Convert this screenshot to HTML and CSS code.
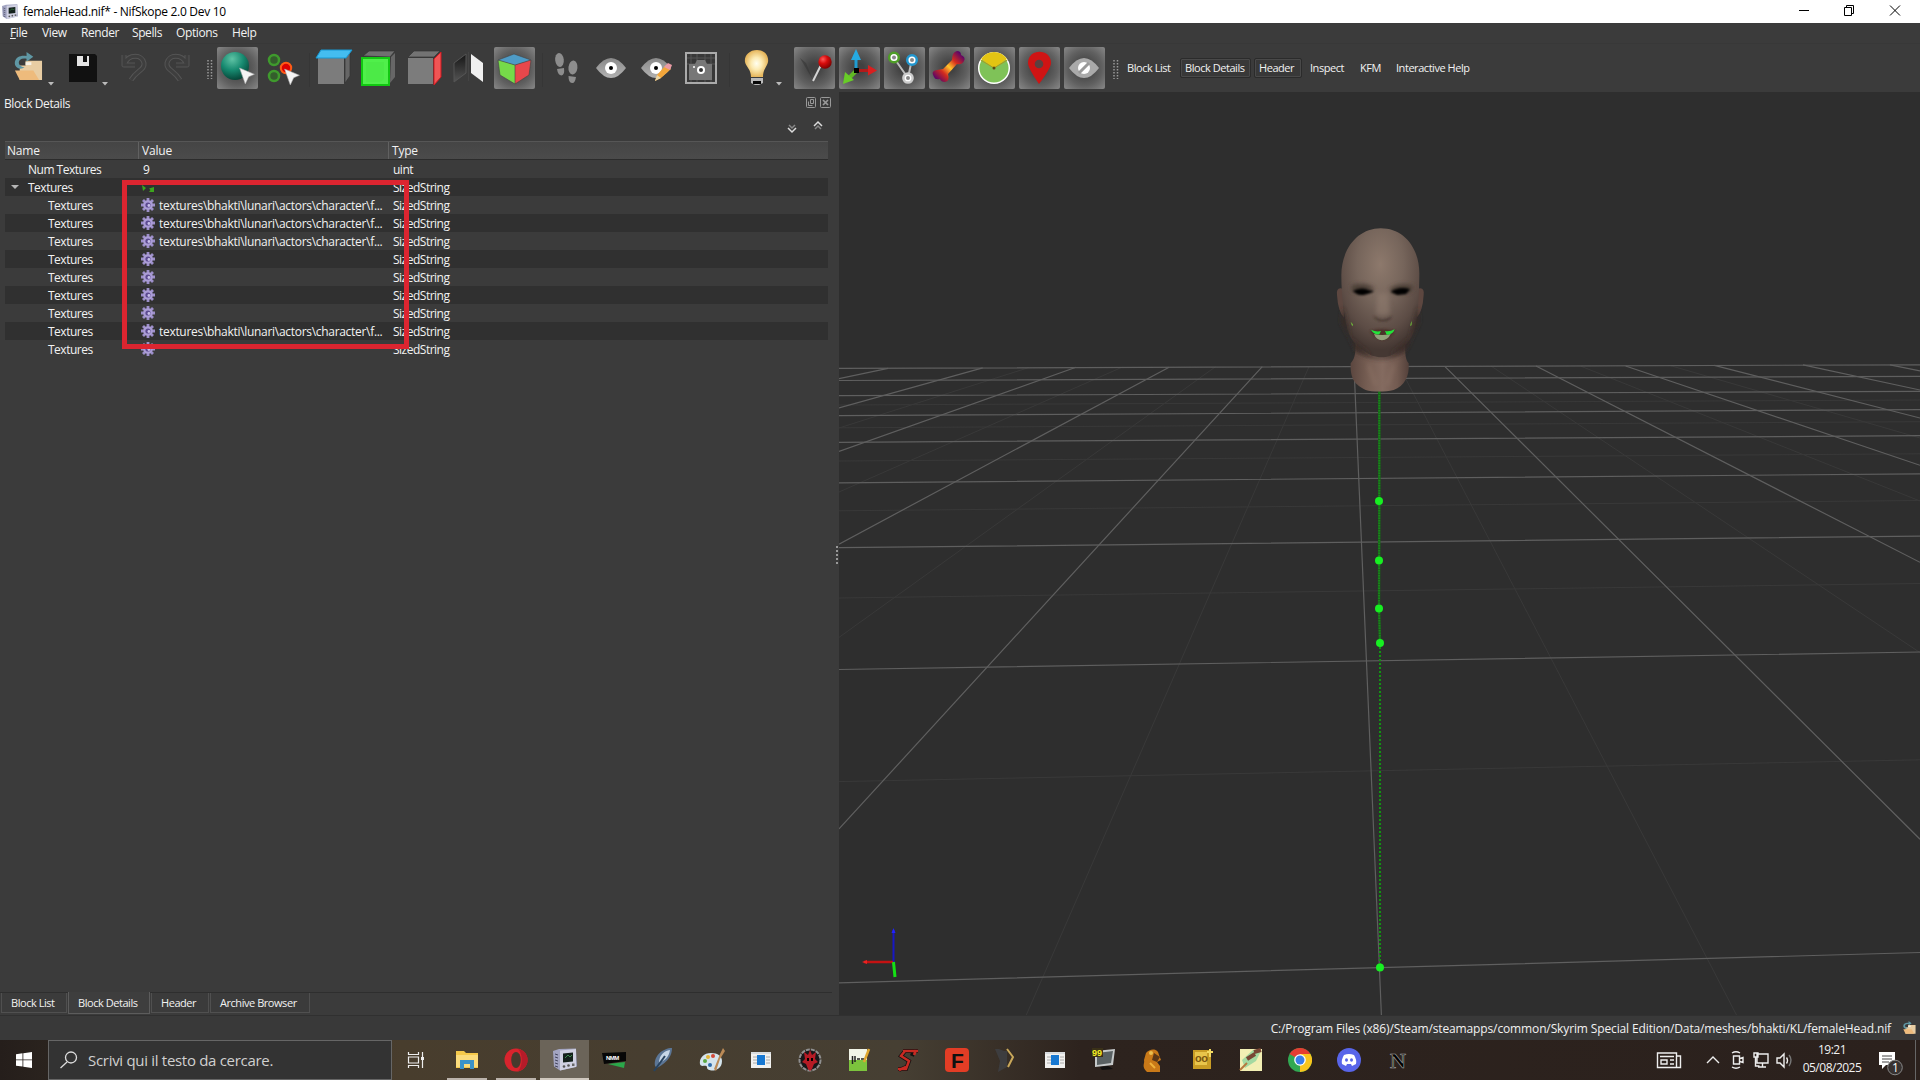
FILE: index.html
```
<!DOCTYPE html>
<html lang="it">
<head>
  <meta charset="UTF-8" />
  <title>femaleHead.nif* - NifSkope 2.0 Dev 10</title>
  <link rel="stylesheet" href="styles.css">
</head>
<body>
  <!-- shared icons and gradients -->
  <svg class="defs" width="0" height="0">
    <defs>
      <symbol id="gear" viewBox="0 0 14 14">
        <g stroke="#9d8fca" stroke-width="2.8">
          <path d="M7 0v14M0 7h14M2 2l10 10M12 2L2 12"/>
        </g>
        <circle cx="7" cy="7" r="4.800" fill="#ab9dd6"/>
        <circle cx="7" cy="7" r="2.600" fill="#5c4a90"/>
        <circle cx="7.900" cy="7.500" r="1.400" fill="#c9c0ea"/>
      </symbol>
      <symbol id="folder" viewBox="0 0 32 32">
        <path d="M14 9h17v20H8V14h6z" fill="#e8cda3"/>
        <path d="M3 19h19l6 10H8z" fill="#eebb7c"/>
        <path d="M13 16c-5 3-11 0-10-6 1-5 6-7 12-6V0l7 5-7 5V7c-5-1-8 1-8 4 0 2 2 4 6 5z" fill="#5f97a4"/>
        <path d="M14 12h6" stroke="#f6f1e6" stroke-width="3"/>
      </symbol>
      <symbol id="cursor" viewBox="0 0 14 15">
        <path d="M.5 .5l13 5.500-5 2.200-3 6.300z" fill="#f4f4f4" stroke="#aaa" stroke-width=".5"/>
      </symbol>
      <symbol id="exe" viewBox="0 0 24 24">
        <path d="M2 4h20v16H2z" fill="#f1f1ef"/>
        <path d="M2 4h20v2H2z" fill="#d8dcdf"/>
        <path d="M4 9h4M4 12h4M4 15h4M17 9h4M17 12h4M17 15h4" stroke="#aaa" stroke-width="1"/>
        <path d="M8 7h8v10H8z" fill="#1778d2"/>
      </symbol>
      <symbol id="nifskope" viewBox="0 0 24 24">
        <path d="M0 3l6-2 17-.500 1 18-17 4-6-4z" fill="#a3a5c2"/>
        <path d="M7 2.500l16-1.500v18L7 22.500z" fill="#d0d1e2"/>
        <path d="M10 5.500l10-1v9l-10 1z" fill="#15211c"/>
        <path d="M12 10l3-3 2 2 2-2" stroke="#3c8a4c" fill="none"/>
        <path d="M2 6l3 1M2 9l3 1M2 12l3 1M2 15l3 1M2 18l3 1" stroke="#44455e"/>
        <circle cx="11" cy="18.500" r="1.300" fill="#555"/>
        <circle cx="15.500" cy="17.500" r="1.300" fill="#555"/>
        <path d="M19 15.500h2.500v2.500H19z" fill="#666"/>
      </symbol>
      <radialGradient id="ball" cx=".4" cy=".25" r=".8">
        <stop offset="0" stop-color="#5fc3a5"/><stop offset=".5" stop-color="#178a70"/><stop offset="1" stop-color="#043e32"/>
      </radialGradient>
      <radialGradient id="pinball" cx=".35" cy=".3" r=".8">
        <stop offset="0" stop-color="#ff5a5a"/><stop offset=".4" stop-color="#d80c0c"/><stop offset="1" stop-color="#6d0000"/>
      </radialGradient>
      <radialGradient id="bulb">
        <stop offset="0" stop-color="#fffef0"/><stop offset=".45" stop-color="#fcebb4"/><stop offset="1" stop-color="#e6b65c"/>
      </radialGradient>
      <linearGradient id="bone" x1="0" y1="1" x2="1" y2="0">
        <stop offset=".08" stop-color="#4c0070"/><stop offset=".32" stop-color="#d32b1e"/><stop offset=".5" stop-color="#ffc52c"/><stop offset=".68" stop-color="#d32b1e"/><stop offset=".92" stop-color="#4c0070"/>
      </linearGradient>
      <linearGradient id="silver" x1="0" y1="0" x2="0" y2="1">
        <stop offset="0" stop-color="#8a8a8a"/><stop offset="1" stop-color="#b2b2b2"/>
      </linearGradient>
      <linearGradient id="mirror" x1="0" y1="0" x2="0" y2="1">
        <stop offset="0" stop-color="#151515"/><stop offset="1" stop-color="#555"/>
      </linearGradient>
      <linearGradient id="neck" x1="0" x2="1">
        <stop offset="0" stop-color="#5b463f"/><stop offset=".3" stop-color="#775f54"/><stop offset=".55" stop-color="#846b60"/><stop offset=".8" stop-color="#735b51"/><stop offset="1" stop-color="#54413b"/>
      </linearGradient>
      <radialGradient id="skin" cx=".5" cy=".28" r=".66">
        <stop offset="0" stop-color="#8d796c"/><stop offset=".45" stop-color="#76655b"/><stop offset=".8" stop-color="#5c4c45"/><stop offset="1" stop-color="#453833"/>
      </radialGradient>
      <filter id="soft" x="-50%" y="-50%" width="200%" height="200%"><feGaussianBlur stdDeviation="6"/></filter>
      <filter id="soft2" x="-50%" y="-50%" width="200%" height="200%"><feGaussianBlur stdDeviation="3"/></filter>
    </defs>
  </svg>

  <header class="titlebar">
    <svg width="16" height="16"><use href="#nifskope"/></svg>
    <span class="title">femaleHead.nif* - NifSkope 2.0 Dev 10</span>
    <svg class="winbtns" width="122" height="23" viewBox="1798 0 122 23" fill="none" stroke="#000">
      <path d="M1799 10.500h10M1844.500 7.500h7v8h-7zM1846.500 7v-1.500h7v8h-2M1890 5.500l10 10M1900 5.500l-10 10"/>
    </svg>
  </header>

  <nav class="menubar">
    <span class="m-file"><u>F</u>ile</span>
    <span class="m-view">View</span>
    <span class="m-render">Render</span>
    <span class="m-spells">Spells</span>
    <span class="m-options">Options</span>
    <span class="m-help">Help</span>
  </nav>

  <div class="toolbar">
    <svg width="60" height="49" viewBox="0 43 60 49">
      <use href="#folder" x="11" y="51" width="33" height="31"/>
      <path d="M48 81h6l-3 3.500z" fill="#bbb"/>
    </svg>
    <svg width="55" height="49" viewBox="60 43 55 49">
      <path d="M69 53h26l2 2v26H69z" fill="#111"/>
      <path d="M77 55h12v10H77z" fill="#e4e4e4"/><path d="M83 55h4v6h-4z" fill="#111"/>
      <path d="M102 81h6l-3 3.500z" fill="#bbb"/>
    </svg>
    <svg width="85" height="49" viewBox="115 43 85 49" fill="none">
      <g stroke="#555" stroke-width="5" stroke-linejoin="round">
        <path d="M124 54v10h11M125 62c4-9 17-9 19 0 1 7-7 7-13 17"/>
        <path d="M187 54v10h-11M186 62c-4-9-17-9-19 0-1 7 7 7 13 17"/>
      </g>
      <g stroke="#3e3e3e" stroke-width="3">
        <path d="M124 54v10h11M125 62c4-9 17-9 19 0 1 7-7 7-13 17"/>
        <path d="M187 54v10h-11M186 62c-4-9-17-9-19 0-1 7 7 7 13 17"/>
      </g>
    </svg>
    <svg width="15" height="49" viewBox="200 43 15 49"><path d="M208 59v19M211.500 59v19" stroke="#999" stroke-width="1.500" stroke-dasharray="1.500 1.500"/></svg>
    <svg class="checked" width="41" height="42" viewBox="217 46 41 42">
      <circle cx="235" cy="65" r="14" fill="url(#ball)"/>
      <use href="#cursor" x="239" y="66" width="16" height="18"/>
    </svg>
    <svg width="50" height="49" viewBox="260 43 50 49">
      <g fill="#345d2c" stroke="#3f9a2d" stroke-width="2.500"><circle cx="274" cy="59" r="5"/><circle cx="274" cy="75" r="5"/></g>
      <circle cx="286" cy="67" r="5.200" fill="#d00" stroke="#ff5a16" stroke-width="2"/>
      <use href="#cursor" x="284" y="67" width="16" height="18"/>
      <path d="M309.500 52v34" stroke="#363636"/>
    </svg>
    <svg width="47" height="49" viewBox="310 43 47 49">
      <path d="M318 57h26v26h-26z" fill="#7c7c7c"/><path d="M345 56l5-6v25l-5 7z" fill="#666" stroke="#333" stroke-width=".7"/>
      <path d="M316 57l5-8h31l-6 8z" fill="#44bdf0" stroke="#1698d3"/>
    </svg>
    <svg width="45" height="49" viewBox="357 43 45 49">
      <path d="M363 55l6-5h26l-5 6z" fill="#707070" stroke="#333" stroke-width=".7"/><path d="M391 56l4-4v24l-5 6z" fill="#676767"/>
      <path d="M362 57h27v27h-27z" fill="#50ef4b" stroke="#12c812" stroke-width="2"/>
      <path d="M366 61h18v17l-4 3h-14z" fill="#4cea47"/>
    </svg>
    <svg width="45" height="49" viewBox="402 43 45 49">
      <path d="M408 57h25v26h-25z" fill="#7c7c7c"/><path d="M408 56l6-6h26l-6 6z" fill="#737373" stroke="#333" stroke-width=".7"/>
      <path d="M434 58l7-7v25l-7 8z" fill="#f05555" stroke="#d31820"/>
    </svg>
    <svg width="45" height="49" viewBox="447 43 45 49">
      <path d="M454 62l12-9v19l-12 9z" fill="url(#mirror)" stroke="#555"/>
      <path d="M468.500 51v29" stroke="#444"/><path d="M471 53l12 9v19l-12-9z" fill="#f0f0f0"/>
    </svg>
    <svg class="checked" width="41" height="42" viewBox="494 46 41 42">
      <path d="M498 59l16-6 17 6-16 5z" fill="#4e9bc6"/>
      <path d="M498 59l17 5v19l-15-9z" fill="#76da49"/><path d="M515 64l16-5-2 15-14 9z" fill="#e8474b"/>
      <path d="M498 59l17 5v19l-15-9zM515 64l16-5-2 15-14 9M498 59l16-6 17 6" fill="none" stroke="#444" stroke-width=".6"/>
    </svg>
    <svg width="53" height="49" viewBox="537 43 53 49" fill="#8d8d8d">
      <path d="M542.500 52v34" stroke="#363636"/>
      <ellipse cx="559.500" cy="59" rx="4.300" ry="7" transform="rotate(-6 559 59)"/><path d="M557 68l7-1q1 7-2.500 7.500-3.500 0-4.500-6.500z"/>
      <ellipse cx="573" cy="66.500" rx="4.500" ry="7" transform="rotate(6 573 66)"/><path d="M568.500 75l7.500 1q-1 6.500-4 6-3.500 0-3.500-7z"/>
    </svg>
    <svg width="44" height="49" viewBox="590 43 44 49">
      <path d="M596 67q15-20 30 0-15 20-30 0z" fill="url(#silver)"/><circle cx="611" cy="67" r="6" fill="#fff"/><circle cx="611" cy="67" r="2" fill="#000"/>
    </svg>
    <svg width="46" height="49" viewBox="634 43 46 49">
      <path d="M641 67q15-20 30 0-15 20-30 0z" fill="url(#silver)"/><circle cx="656" cy="67" r="6" fill="#fff"/><circle cx="656" cy="67" r="2" fill="#000"/>
      <path d="M655 80l2-6 9-10 5 4-10 9z" fill="#f3a63a"/><path d="M664 66l4-4 4 2-2 5z" fill="#e99aa5"/><path d="M655 80l2-6 4 3z" fill="#e9d6a8"/>
    </svg>
    <svg width="50" height="49" viewBox="680 43 50 49">
      <path d="M686 52h30v30h-30z" fill="#383838" stroke="#aaa" stroke-width="2"/>
      <path d="M691 53v28M697 53v28M705 53v28M711 53v28M687 57h28M687 63h28" stroke="#555"/>
      <path d="M689 63h6l2-4h8l2 4h5v16h-23z" fill="#777"/><circle cx="701" cy="69" r="4" fill="#fff"/><circle cx="701" cy="69" r="2" fill="#333"/><circle cx="694" cy="66" r="1" fill="#fff"/>
      <path d="M729.500 52v34" stroke="#363636"/>
    </svg>
    <svg width="62" height="49" viewBox="730 43 62 49">
      <path d="M751 77h12v5l-4 2h-4l-4-2z" fill="#b9b9b9"/><path d="M753 80h8v3h-8z" fill="#080808"/>
      <path d="M757 49c8 0 12 6 11 12-1 5-5 7-5 15h-12c0-8-5-10-6-15-1-6 4-12 12-12z" fill="url(#bulb)"/>
      <path d="M776 81h6l-3 3.500z" fill="#bbb"/>
    </svg>
    <svg class="checked" width="41" height="42" viewBox="794 46 41 42">
      <path d="M800 57l6 5 7 17z" fill="#333" opacity=".55"/><path d="M822 62l-9 18" stroke="#d4d4d4" stroke-width="2"/>
      <circle cx="825" cy="61" r="6.700" fill="url(#pinball)"/>
    </svg>
    <svg class="checked" width="41" height="42" viewBox="839 46 41 42">
      <path d="M856 69v-14" stroke="#1f9cd2" stroke-width="3"/><path d="M851 59l5-11 5 11z" fill="#25aae3"/>
      <path d="M856 69.500h14" stroke="#b31a1a" stroke-width="3"/><path d="M868 64l9 5.500-9 5z" fill="#d91f1f"/>
      <path d="M856 70l-8 8" stroke="#61b824" stroke-width="4"/><path d="M845 71l9 8-11 4z" fill="#68cd27"/>
      <path d="M854 67h5v5h-5z" fill="#000"/>
    </svg>
    <svg class="checked" width="41" height="42" viewBox="884 46 41 42">
      <path d="M894 57l14 20 4-19" stroke="#bbb" stroke-width="2" fill="none"/>
      <g fill="#fff" stroke-width="2.500"><circle cx="894" cy="56.500" r="4.800" stroke="#4e9e26"/><circle cx="912" cy="59" r="4.800" stroke="#2297cf"/><circle cx="908" cy="77" r="4.600" stroke="#ccc"/></g>
      <g fill="#888"><circle cx="894" cy="56.500" r="2"/><circle cx="912" cy="59" r="2"/><circle cx="908" cy="77" r="2"/></g>
    </svg>
    <svg class="checked" width="41" height="42" viewBox="929 46 41 42">
      <path d="M934 76q-4-6 3-7l6-1 9-9q0-8 5-9 4 0 4 4 5 2 3 6-2 4-7 3l-9 10q2 7-3 8-4 0-5-3-5 1-6-2z" fill="url(#bone)"/>
    </svg>
    <svg class="checked" width="41" height="42" viewBox="974 46 41 42">
      <circle cx="994" cy="67" r="15.300" fill="#7fc258" stroke="#fff" stroke-width="1.500"/>
      <path d="M994 67l-13-9q5-7 13-7t13 7z" fill="#e3c413"/><path d="M980.500 59l13.500 8 13.500-8" stroke="#a99a22" fill="none"/><circle cx="994" cy="67" r="1.500" fill="#5c4a12"/>
    </svg>
    <svg class="checked" width="41" height="42" viewBox="1019 46 41 42">
      <path d="M1039 83q-11-16-11-21c0-15 23-15 23 0q0 5-12 21z" fill="#cf1414"/><circle cx="1039" cy="63" r="4.300" fill="#5c4040"/>
    </svg>
    <svg class="checked" width="41" height="42" viewBox="1064 46 41 42">
      <path d="M1069 67q15-20 30 0-15 20-30 0z" fill="#aaa"/><circle cx="1084" cy="67" r="6" fill="#fff"/><path d="M1079 72l10-10" stroke="#999" stroke-width="3"/>
    </svg>
    <svg width="17" height="49" viewBox="1107 43 17 49"><path d="M1114 59v19M1117.500 59v19" stroke="#999" stroke-width="1.500" stroke-dasharray="1.500 1.500"/></svg>
    <span class="tb t-list">Block List</span>
    <span class="tb on t-details">Block Details</span>
    <span class="tb on t-header">Header</span>
    <span class="tb t-inspect">Inspect</span>
    <span class="tb t-kfm">KFM</span>
    <span class="tb t-help">Interactive Help</span>
  </div>

  <main class="workspace">
    <section class="dock">
      <div class="dock-title">
        <span class="ui">Block Details</span>
        <svg width="26" height="12" viewBox="0 0 26 12" fill="none" stroke="#999">
          <rect x=".5" y=".5" width="9" height="10" rx="1"/><path d="M4.500 2.500h3v4h-3zM2.500 4.500v4h4"/>
          <rect x="14.500" y=".5" width="10" height="10" rx="1"/><path d="M17 3l5 5M22 3l-5 5" stroke-width="1.700"/>
        </svg>
      </div>
      <div class="dock-tools">
        <svg width="38" height="14" viewBox="0 0 38 14" fill="none" stroke="#ddd" stroke-width="1.500">
          <path d="M2 8l4 4 4-4"/><path d="M3 5l3 3 3-3" stroke="#888"/><path d="M28 6l4-4 4 4"/><path d="M29 9l3-3 3 3" stroke="#888"/>
        </svg>
      </div>

      <div class="tree">
        <div class="row head"><span>Name</span><span>Value</span><span>Type</span></div>
        <div class="row num"><span>Num Textures</span><span>9</span><span>uint</span></div>
        <div class="row parent alt"><span><i class="arrow"></i>Textures</span><span><svg width="14" height="14" viewBox="0 0 14 14"><path d="M2 5l2-4h6l2 4-3 0-1-2-2 0-1 2zM13 7v5H8l1.500-2L8 8.500zM1 5l4 3-3 3z" fill="#3da51d"/></svg></span><span>SizedString</span></div>
        <div class="row"><span>Textures</span><span class="path"><svg width="14" height="14"><use href="#gear"/></svg>textures\bhakti\lunari\actors\character\f...</span><span>SizedString</span></div>
        <div class="row alt"><span>Textures</span><span class="path"><svg width="14" height="14"><use href="#gear"/></svg>textures\bhakti\lunari\actors\character\f...</span><span>SizedString</span></div>
        <div class="row"><span>Textures</span><span class="path"><svg width="14" height="14"><use href="#gear"/></svg>textures\bhakti\lunari\actors\character\f...</span><span>SizedString</span></div>
        <div class="row alt"><span>Textures</span><span><svg width="14" height="14"><use href="#gear"/></svg></span><span>SizedString</span></div>
        <div class="row"><span>Textures</span><span><svg width="14" height="14"><use href="#gear"/></svg></span><span>SizedString</span></div>
        <div class="row alt"><span>Textures</span><span><svg width="14" height="14"><use href="#gear"/></svg></span><span>SizedString</span></div>
        <div class="row"><span>Textures</span><span><svg width="14" height="14"><use href="#gear"/></svg></span><span>SizedString</span></div>
        <div class="row alt"><span>Textures</span><span class="path"><svg width="14" height="14"><use href="#gear"/></svg>textures\bhakti\lunari\actors\character\f...</span><span>SizedString</span></div>
        <div class="row"><span>Textures</span><span><svg width="14" height="14"><use href="#gear"/></svg></span><span>SizedString</span></div>
        <div class="marker"></div>
      </div>

      <div class="tabs">
        <span class="tab tab-list">Block List</span>
        <span class="tab active">Block Details</span>
        <span class="tab tab-header">Header</span>
        <span class="tab tab-archive">Archive Browser</span>
      </div>
    </section>
    <div class="splitter"></div>

    <svg class="viewport" width="1081" height="923" viewBox="839 92 1081 923" fill="none">
      <g stroke="#393939">
        <path d="M839 781.600L1920 759.800M839 598L1920 583.500M839 510.800L1920 500.500M839 461L1920 453.800M839 427.800L1920 421.700M839 405L1920 400"/>
        <path d="M1309 366.600L1026.300 1015M1399 366L1736.500 1015M1215.700 366.600L839 637.400M1122.500 367L839 492M1029 367.500L839 428M1491 366L1920 652.600M1580.400 366L1920 501M1670 365.500L1920 438"/>
      </g>
      <g stroke="#5f5f5f" stroke-width="1.200">
        <path d="M839 982.800L1920 952.500M839 669.500L1920 652M839 547.700L1920 536.200M839 482.900L1920 473.800M839 442.300L1920 435.700M839 415.700L1920 409.600M839 395.700L1920 391.400M839 380.500L1920 376.300M839 368.400L1920 364.800"/>
        <path d="M1381.400 1015L1354 366M839 828.900L1262.300 366.600M839 544.100L1169.100 367.200M839 451.400L1076 367.200M839 407.800L982.700 367.800M839 378.700L888 368.400"/>
        <path d="M1445 366.600L1920 839.200M1536 366L1920 562.300M1625.600 366L1920 465.300M1714.300 365.400L1920 418M1803 364.800L1920 390M1890 364.800L1920 370.800"/>
      </g>

      <!-- bone chain -->
      <path d="M1379.300 390V500L1379 608L1380 643" stroke="#1c5c1c" stroke-width="2.500"/>
      <path d="M1379.300 390V500L1379 608L1380 643" stroke="#18881a" stroke-width="2" stroke-dasharray="1.500 1"/>
      <path d="M1380 643V967" stroke="#129612" stroke-width="2" stroke-dasharray="2 2"/>
      <g fill="#17ef22"><circle cx="1379" cy="501" r="4"/><circle cx="1379" cy="560.500" r="4"/><circle cx="1379" cy="608.500" r="4"/><circle cx="1380" cy="643" r="4"/><circle cx="1380" cy="967.500" r="4"/></g>

      <!-- head -->
      <svg x="1300" y="210" width="160" height="200" viewBox="0 0 480 600">
        <path d="M167 400c0 40-6 50-15 60-2 50 15 65 45 80 20 6 58 6 84 0 32-12 48-40 45-80-9-10-12-30-10-65z" fill="url(#neck)"/>
        <path d="M165 395q75 90 152 0v30q-70 45-152 0z" fill="#3a2d29" opacity=".8" filter="url(#soft)"/>
        <path d="M205 465l22 60M281 465l-18 60" stroke="#9b8071" stroke-width="8" opacity=".4" filter="url(#soft)"/>
        <path d="M130 237q-22-8-19 18 3 50 21 68zM352 237q22-8 19 18-3 50-21 68z" fill="#5d4740"/>
        <path d="M242 55c70 0 118 60 116 141-1 70-5 135-14 160-8 30-27 50-46 65-20 16-35 21-54 21s-35-6-55-21c-20-15-40-35-47-65-8-30-18-90-18-160 0-80 50-141 118-141z" fill="url(#skin)"/>
        <g filter="url(#soft)">
          <path d="M155 226q45-12 70 12-45 14-70 6zM268 238q30-24 74-10l-12 20-52 2z" fill="#4a3c36"/>
          <path d="M232 250l-4 60q20 16 42 0l-6-60z" fill="#927d71" opacity=".55"/>
          <path d="M128 290l22 95 65 52-50-20-42-80zM354 290l-24 95-60 50 52-20 36-80z" fill="#382b27"/>
        </g>
        <g filter="url(#soft2)">
          <path d="M158 243q26-14 50-2 16 2 12 4-34 15-48 8zM272 245q28-18 58-7l-12 14-26 3z" fill="#020202"/>
          <path d="M219 318q12 9 28 12 18-2 30-12-8 16-28 16t-30-16z" fill="#3f312c"/>
          <path d="M209 362q35-10 78 0l-18 21q-20 12-42 0z" fill="#4b302b"/>
        </g>
        <path d="M222 372q24 6 50 0-8 18-26 19-18-2-24-19z" fill="#93a07c"/>
        <path d="M213 359q16 8 30 4l-5 10q-16 2-25-14zM255 363q14 3 29-5-6 17-24 16z" fill="#22e43a"/>
        <path d="M152 335l7 8v6q-6-4-7-14zM336 333l-1 13-5 2q0-8 6-15z" fill="#6aa83a"/>
      </svg>

      <!-- axes -->
      <path d="M893.500 962V930" stroke="#1717c4" stroke-width="2"/><path d="M893.500 928l-2 5h4z" fill="#22f"/>
      <path d="M893 962h-29" stroke="#c41212" stroke-width="2.500"/><path d="M862 962l5-2v4z" fill="#e22"/>
      <path d="M893.500 962l1.500 15" stroke="#15e015" stroke-width="3"/>
    </svg>
  </main>

  <div class="statusbar">
    <span>C:/Program Files (x86)/Steam/steamapps/common/Skyrim Special Edition/Data/meshes/bhakti/KL/femaleHead.nif</span>
    <svg width="14" height="14"><use href="#folder"/></svg>
  </div>

  <footer class="taskbar">
    <div class="start"><svg width="16" height="16" viewBox="0 0 16 16" fill="#fff"><path d="M0 2.200l6.500-.9v6.200H0zM7.300 1.200L16 0v7.500H7.300zM0 8.300h6.500v6.300L0 13.700zM7.300 8.300H16V16l-8.700-1.300z"/></svg></div>
    <div class="search">
      <svg width="18" height="18" viewBox="0 0 18 18" fill="none" stroke="#ddd" stroke-width="1.300"><circle cx="11" cy="6.500" r="5.500"/><path d="M7 11l-6.500 6"/></svg>
      <span>Scrivi qui il testo da cercare.</span>
    </div>
    <div class="app taskview"><svg width="18" height="16" viewBox="0 0 18 16" fill="none" stroke="#eee" stroke-width="1.200"><path d="M1.500 0v2.500h10V0M1.500 5h10v6h-10zM1.500 16v-2.500h10V16M15.500 0v16"/><path d="M14 5h3v3h-3z" fill="#eee" stroke="none"/></svg></div>
    <div class="app open"><svg width="24" height="24" viewBox="0 0 24 24"><path d="M1 3h8l2 2h12v15H1z" fill="#f5c94b"/><path d="M1 7h22v12H1z" fill="#fbdc7c"/><path d="M5 21v-9h14v9h-4v-5H9v5z" fill="#3b93c8"/></svg></div>
    <div class="app open"><svg width="24" height="24" viewBox="0 0 24 24"><ellipse cx="12" cy="12" rx="11.500" ry="11.500" fill="#d8242d"/><path d="M14 .7c13 3 13 19.600 0 22.600 5-5 5-17.600 0-22.600z" fill="#b51b29"/><ellipse cx="12" cy="12" rx="4.800" ry="8" fill="#453a2d"/></svg></div>
    <div class="app current"><svg width="24" height="24"><use href="#nifskope"/></svg></div>
    <div class="app"><svg width="26" height="24" viewBox="0 0 26 24"><path d="M1 5l24-1v9L3 16z" fill="#070707"/><path d="M7 16l17-2-1 6z" fill="#2aa84a"/><text x="5" y="12" class="nmm">NMM</text></svg></div>
    <div class="app"><svg width="24" height="24" viewBox="0 0 24 24"><path d="M4 18C2 8 12 0 21 0c0 7-3 13-15 20z" fill="#5c7696"/><path d="M8 15C8 7 13 3 19 2c-1 6-4 10-11 13z" fill="#c7d7e8"/><path d="M3 23l11-15" stroke="#27425e" stroke-width="2"/></svg></div>
    <div class="app"><svg width="26" height="24" viewBox="0 0 26 24"><path d="M12 5c-8 0-12 6-11 11 1 4 6 0 7 3-1 5 15 6 15-6 0-5-4-8-11-8z" fill="#d4e4ed"/><circle cx="6" cy="13" r="2" fill="#5ca943"/><circle cx="9" cy="9" r="2" fill="#e3b436"/><circle cx="14" cy="8" r="2" fill="#d24a39"/><circle cx="11" cy="17" r="2" fill="#2f6ba8"/><path d="M15 21l6-15 3-6 2 3-5 8-4 12z" fill="#bb8a56"/></svg></div>
    <div class="app"><svg width="24" height="24"><use href="#exe"/></svg></div>
    <div class="app"><svg width="24" height="24" viewBox="0 0 24 24"><circle cx="12" cy="12" r="10.500" fill="#171719" stroke="#909090" stroke-width="2" stroke-dasharray="4 1"/><path d="M6 4l4 3 2-5 2 5 4-3-1 7 3 3-4 2-2 5-2 2-2-2-2-5-4-2 3-3z" fill="#b51b25"/><path d="M9 10h2v3H9zM13 10h2v3h-2z"/></svg></div>
    <div class="app"><svg width="24" height="24" viewBox="0 0 24 24"><path d="M2 1h18v22H2z" fill="#f2f5e7"/><path d="M2 12h18v11H2z" fill="#7cc43d"/><path d="M5.500 8v8M8 8v6M10 11h3M14 11h3" stroke="#222" stroke-width="1.500"/><path d="M22 1l-5 13" stroke="#dfa62e" stroke-width="2.500"/></svg></div>
    <div class="app"><svg width="24" height="24" viewBox="0 0 24 24" fill="none"><path d="M22 3H9l-4 5 8 5-3 8H2M7 3h15M3 22l7-3M18 2l-2 6" stroke="#111" stroke-width="4"/><path d="M22 3H9l-4 5 8 5-3 8H2M7 3h15M3 22l7-3M20 2l-2 5" stroke="#c82a22" stroke-width="2.500"/></svg></div>
    <div class="app"><svg width="24" height="24" viewBox="0 0 24 24"><rect width="24" height="24" rx="4" fill="#e33d25"/><text x="6" y="20" class="letter-f">F</text></svg></div>
    <div class="app"><svg width="24" height="24" viewBox="0 0 24 24"><path d="M1 1l4 0 5 2 3 0v16l-9 5 2-11z" fill="#3d3d3f"/><path d="M13 1l6 8-5 10" fill="none" stroke="#c9a85a" stroke-width="2"/></svg></div>
    <div class="app"><svg width="24" height="24"><use href="#exe"/></svg></div>
    <div class="app"><svg width="24" height="24" viewBox="0 0 24 24"><path d="M3 3l20-2-2 16-18 2z" fill="#c5c9ca"/><path d="M5 5l16-2-2 12-14 2z" fill="#596163"/><path d="M8 19l8-1 5 3-11 1z" fill="#111"/><path d="M0 0h11v9H0z" fill="#3a3118"/><text x="0" y="8" class="ninety">99</text></svg></div>
    <div class="app"><svg width="24" height="24" viewBox="0 0 24 24"><path d="M5 5c4-5 12-5 13 2l2 5-4 2 3 4v6H6C0 18 4 16 3 12z" fill="#c97918"/><path d="M13 5l6 4-3 5-5-2z" fill="#5a3616"/><circle cx="10" cy="5" r="2" fill="#eac050"/><path d="M9 15l5 5" stroke="#efb23a" stroke-width="2"/></svg></div>
    <div class="app"><svg width="24" height="24" viewBox="0 0 24 24"><path d="M3 2h18v19H3z" fill="#c99d25"/><path d="M5 4h12v13H5z" fill="#e8c54b"/><path d="M20 1v8M17 4h6" stroke="#f2da62" stroke-width="2"/><text x="5" y="14" class="loot">oo</text></svg></div>
    <div class="app"><svg width="24" height="24" viewBox="0 0 24 24"><path d="M1 1h22v22H1z" fill="#f2efb4"/><path d="M3 12L14 2l8 1-5 10-11 7z" fill="#a4d9a1"/><path d="M8 11l8-5M15 4l7-2" stroke="#784735" stroke-width="4"/><path d="M1 22l7-7" stroke="#b6783d" stroke-width="2"/></svg></div>
    <div class="app"><svg width="24" height="24" viewBox="0 0 24 24"><circle cx="12" cy="12" r="12" fill="#31a852"/><path d="M12 12L1.600 6A12 12 0 0 1 22.400 6z" fill="#e53d32"/><path d="M12 12V6h10.400A12 12 0 0 1 12 24z" fill="#f9c51d"/><circle cx="12" cy="12" r="5.800" fill="#fff"/><circle cx="12" cy="12" r="4.500" fill="#3b7ee8"/></svg></div>
    <div class="app"><svg width="24" height="24" viewBox="0 0 24 24"><circle cx="12" cy="12" r="12" fill="#5865e9"/><path d="M7 7q5-2 10 0 3 5 2 9l-4 2-1-2h-4l-1 2-4-2q-1-4 2-9z" fill="#fff"/><ellipse cx="9.500" cy="12" rx="1.500" ry="1.800" fill="#5865e9"/><ellipse cx="14.500" cy="12" rx="1.500" ry="1.800" fill="#5865e9"/></svg></div>
    <div class="app"><svg width="24" height="32" viewBox="0 0 24 32"><text x="4" y="24" class="letter-n">N</text></svg></div>

    <svg class="tray" width="140" height="40" viewBox="1656 1040 140 40" fill="none" stroke="#eee" stroke-width="1.400">
      <path d="M1657.500 1053h19v14.500h-19zM1677 1056h3.500v11.500h-4M1660 1056.500h14M1670 1060h4M1670 1064h4M1661 1060h6v4h-6z"/>
      <path d="M1707 1063l6-6 6 6"/>
      <path d="M1733.500 1056h6v8h-6zM1740 1058.500l3-1v5l-3-1M1732 1053q4-2.500 8 0M1732 1067q4 2.500 8 0"/>
      <path d="M1757 1054h11v9h-11zM1754 1053h4v4h-4zM1762.500 1063v4M1758 1067h8M1755.500 1057v9h4"/>
      <path d="M1777 1058h3l4-4v13l-4-4h-3zM1786.500 1057.500q2 3 0 6"/><path d="M1789 1055q4 5 0 11" stroke="#777"/>
    </svg>
    <div class="clock"><span>19:21</span><span>05/08/2025</span></div>
    <svg class="notify" width="48" height="40" viewBox="1872 1040 48 40">
      <path d="M1879 1052h16v13h-9l-4 4v-4h-3z" fill="#fff"/><path d="M1882 1056h10M1882 1059h10M1882 1062h7" stroke="#444"/>
      <circle cx="1895" cy="1067.500" r="7.300" fill="#373231" stroke="#888"/>
      <text x="1892" y="1072" class="badge">1</text>
      <path d="M1915.500 1040v40" stroke="#666"/>
    </svg>
  </footer>
</body>
</html>
```
FILE: styles.css
```
* {
  box-sizing: border-box;
}

body {
  margin: 0;
  width: 1920px;
  height: 1080px;
  overflow: hidden;
  display: flex;
  flex-direction: column;
  background: #3b3b3b;
  color: #f2f2f2;
  font-family: "Open Sans", "Noto Sans", sans-serif;
  font-size: 12px;
  letter-spacing: -0.5px;
  white-space: nowrap;
}

svg {
  display: block;
  flex: none;
}

.defs {
  position: absolute;
}

.titlebar {
  height: 23px;
  display: flex;
  align-items: center;
  padding-left: 2px;
  background: #fff;
  color: #000;
  letter-spacing: -0.3px;
}

.title {
  margin-left: 5px;
}

.winbtns {
  margin-left: auto;
}

.menubar {
  height: 20px;
  display: flex;
  align-items: center;
  padding: 0 0 2px 10px;
  letter-spacing: -0.4px;
}

.m-file { width: 32px; }
.m-view { width: 39px; }
.m-render { width: 51px; }
.m-spells { width: 44px; }
.m-options { width: 56px; }

.toolbar {
  height: 49px;
  display: flex;
  align-items: center;
  border-top: 1px solid #383838;
}

.checked {
  margin: 0 2px;
  border-radius: 2px;
  background: radial-gradient(circle, #414141 15%, #606060 60%, #888 100%);
}

.tb {
  height: 20px;
  line-height: 18px;
  font-size: 11px;
  letter-spacing: -0.45px;
  border: 1px solid transparent;
}

.on {
  background: #383838;
  border-color: #2b2b2b;
  border-radius: 2px;
  box-shadow: inset 0 0 0 1px #494949;
  padding-left: 4px;
}

.t-list { width: 56px; padding-left: 2px; }
.t-details { width: 71px; margin-right: 3px; }
.t-header { width: 48px; margin-right: 7px; }
.t-inspect { width: 50px; }
.t-kfm { width: 36px; }

.workspace {
  display: flex;
  height: 923px;
}

.dock {
  width: 832px;
  display: flex;
  flex-direction: column;
}

.dock-title {
  height: 22px;
  display: flex;
  align-items: center;
  justify-content: space-between;
  padding: 0 0 0 4px;
  letter-spacing: -0.4px;
}

.dock-tools {
  height: 27px;
  padding: 6px 8px 0 0;
  display: flex;
  justify-content: flex-end;
}

.tree {
  position: relative;
  flex: 1;
  margin-left: 5px;
  width: 823px;
}

.row {
  height: 18px;
  display: grid;
  grid-template-columns: 134px 250px 1fr;
  align-items: center;
}

.row span {
  display: flex;
  align-items: center;
  height: 18px;
  padding-left: 4px;
}

.row span:first-child {
  padding-left: 43px;
}

.row span:nth-child(2) {
  padding-left: 2px;
}

.row span svg {
  margin: -1px 4px 0 0;
}

.row .path {
  letter-spacing: -0.3px;
}

.alt {
  background: #303030;
}

.row.head {
  height: 19px;
  background: linear-gradient(#454545, #4b4b4b);
  border-top: 1px solid #565656;
  border-bottom: 1px solid #2c2c2c;
  letter-spacing: -0.2px;
}

.row.head span {
  height: 17px;
  padding: 0 0 1px 3px;
  border-right: 1px solid #616161;
}

.row.head span:first-child {
  padding-left: 2px;
}

.row.head span:last-child {
  border: 0;
}

.row.num span:first-child,
.row.parent span:first-child {
  padding-left: 23px;
}

.row.num span:nth-child(2) {
  padding-left: 4px;
}

.row .arrow {
  border: 4px solid transparent;
  border-top-color: #b5b5b5;
  border-bottom: 0;
  margin: 0 9px 0 -17px;
}

/* highlighted area over the texture paths */
.marker {
  position: absolute;
  left: 117px;
  top: 39px;
  width: 287px;
  height: 169px;
  border: 5px solid #dc2530;
}

.tabs {
  height: 23px;
  display: flex;
  align-items: flex-start;
  gap: 1px;
  padding-left: 1px;
  border-top: 1px solid #2e2e2e;
}

.tab {
  height: 20px;
  line-height: 20px;
  padding-left: 9px;
  font-size: 11px;
  letter-spacing: -0.45px;
  border: 1px solid #505050;
  border-top: 0;
}

.tab-list { width: 66px; }
.tab-header { width: 58px; }
.tab-archive { width: 100px; }

.tab.active {
  width: 82px;
  height: 22px;
  line-height: 22px;
  margin-top: -1px;
  background: #3e3e3e;
  border-color: #5c5c5c;
}

.splitter {
  width: 7px;
  padding: 3px 0 0 2px;
  display: flex;
  align-items: center;
  justify-content: center;
}

.splitter::after {
  content: "";
  width: 0;
  height: 18px;
  border-left: 2px dotted #999;
}

.viewport {
  background: #2e2e2e;
}

.statusbar {
  height: 25px;
  display: flex;
  align-items: center;
  justify-content: flex-end;
  gap: 11px;
  padding-right: 4px;
  background: #393939;
  border-top: 1px solid #303030;
  letter-spacing: -0.13px;
}

.taskbar {
  height: 40px;
  display: flex;
  background: linear-gradient(90deg, #251e1b 0, #2a231e 48px, #483d2d 400px, #463f33 900px, #2d231e 1080px, #2b211d 1920px);
}

.start {
  width: 48px;
  display: flex;
  align-items: center;
  justify-content: center;
}

.search {
  width: 344px;
  display: flex;
  align-items: center;
  gap: 10px;
  padding-left: 11px;
  background: #333;
  border: 1px solid #666;
  color: #d0d0d0;
  font-size: 15px;
  letter-spacing: -0.3px;
}

.app {
  width: 49px;
  display: flex;
  align-items: center;
  justify-content: center;
}

.taskview {
  width: 50px;
  padding-right: 2px;
}

.open {
  background: linear-gradient(#bbb3ab, #bbb3ab) center bottom / 40px 2px no-repeat;
}

.current {
  background: #6b6459;
  border-bottom: 2px solid #cfc8bf;
  padding-top: 2px;
}

.tray {
  margin-left: 234px;
}

.clock {
  width: 72px;
  padding-top: 1px;
  margin-right: 4px;
  display: flex;
  flex-direction: column;
  align-items: center;
  line-height: 18px;
}

.nmm {
  font: bold 6px "Liberation Sans", sans-serif;
  fill: #fff;
}

.letter-f {
  font: bold 21px "Liberation Sans", sans-serif;
  fill: #111;
}

.letter-n {
  font: bold 22px "Liberation Serif", serif;
  fill: #000;
  stroke: #aaa;
  stroke-width: 0.6px;
}

.ninety {
  font: bold 9px "Liberation Sans", sans-serif;
  letter-spacing: 0;
  fill: #f5ef24;
}

.loot {
  font: bold 11px "Liberation Sans", sans-serif;
  fill: #7a5510;
}

.badge {
  font-size: 12px;
  fill: #fff;
}
```
